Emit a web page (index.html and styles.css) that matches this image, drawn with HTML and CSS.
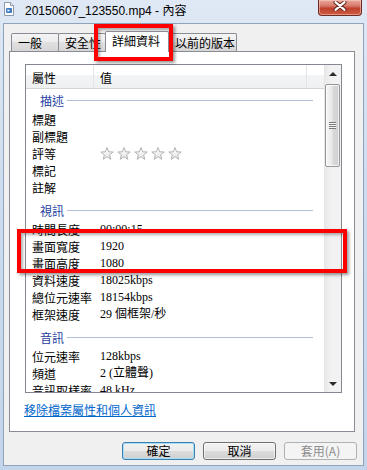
FILE: index.html
```html
<!DOCTYPE html>
<html lang="zh-Hant">

<head>
    <meta charset="utf-8">
    <title>20150607_123550.mp4 - 內容</title>
    <meta name="viewport" content="width=device-width, initial-scale=1.0">
    <link rel="stylesheet" href="styles.css">
</head>

<body>
    <div class="fenetre">
        <!-- Barre de titre -->
        <header class="barre-titre">
            <svg class="icone-fichier" viewBox="0 0 14 14">
                <path d="M2.5 0.5h6l3 3v10h-9z" fill="#fdfdfd" stroke="#8d9aab" />
                <path d="M8.5 0.5v3h3" fill="#e6edf5" stroke="#8d9aab" />
                <rect x="4" y="6" width="6" height="5" rx="1" fill="#3f7cc4" />
                <path d="M5.5 7.3l2.6 1.2-2.6 1.2z" fill="#fff" />
            </svg>
            <span class="titre">20150607_123550.mp4 - 內容</span>
            <div class="fermer">
                <svg viewBox="0 0 14 10" width="14" height="10">
                    <path d="M2.5 1.2l9 7.6M11.5 1.2l-9 7.6" stroke="#5b2118" stroke-width="4" stroke-linecap="round" />
                    <path d="M2.5 1.2l9 7.6M11.5 1.2l-9 7.6" stroke="#fff" stroke-width="2.2" stroke-linecap="round" />
                </svg>
            </div>
        </header>

        <div class="client">
            <!-- Onglets -->
            <nav class="onglets">
                <span class="onglet o1">一般</span>
                <span class="onglet o2">安全性</span>
                <span class="onglet o3 actif">詳細資料</span>
                <span class="onglet o4">以前的版本</span>
            </nav>

            <!-- Panneau des détails -->
            <section class="panneau">
                <div class="liste">
                    <div class="colonne-contenu">
                        <div class="entete">
                            <span class="entete-cellule c-nom">屬性</span>
                            <span class="entete-cellule c-valeur">值</span>
                            <span class="entete-cellule c-vide"></span>
                        </div>

                        <div class="groupe">描述</div>
                        <div class="ligne"><span>標題</span><span></span></div>
                        <div class="ligne"><span>副標題</span><span></span></div>
                        <div class="ligne"><span>評等</span>
                            <span class="etoiles">
                                <svg viewBox="0 0 84 14" width="84" height="14">
                                    <defs>
                                        <linearGradient id="degrade-etoile" x1="0" y1="0" x2="0" y2="1">
                                            <stop offset="0" stop-color="#ffffff" />
                                            <stop offset="1" stop-color="#e4e4e4" />
                                        </linearGradient>
                                        <polygon id="etoile" points="7,0.5 8.6,4.8 13.2,5 9.6,7.8 10.8,12.3 7,9.7 3.2,12.3 4.4,7.8 0.8,5 5.4,4.8" fill="url(#degrade-etoile)" stroke="#b3b3b3" stroke-linejoin="round" />
                                    </defs>
                                    <use href="#etoile" x="0" />
                                    <use href="#etoile" x="17" />
                                    <use href="#etoile" x="34" />
                                    <use href="#etoile" x="51" />
                                    <use href="#etoile" x="68" />
                                </svg>
                            </span>
                        </div>
                        <div class="ligne"><span>標記</span><span></span></div>
                        <div class="ligne"><span>註解</span><span></span></div>

                        <div class="groupe">視訊</div>
                        <div class="ligne"><span>時間長度</span><span>00:00:15</span></div>
                        <div class="ligne"><span>畫面寬度</span><span>1920</span></div>
                        <div class="ligne"><span>畫面高度</span><span>1080</span></div>
                        <div class="ligne"><span>資料速度</span><span>18025kbps</span></div>
                        <div class="ligne"><span>總位元速率</span><span>18154kbps</span></div>
                        <div class="ligne"><span>框架速度</span><span>29 個框架/秒</span></div>

                        <div class="groupe">音訊</div>
                        <div class="ligne"><span>位元速率</span><span>128kbps</span></div>
                        <div class="ligne"><span>頻道</span><span>2 (立體聲)</span></div>
                        <div class="ligne"><span>音訊取樣率</span><span>48 kHz</span></div>
                    </div>

                    <!-- Barre de défilement -->
                    <div class="defilement">
                        <div class="fleche"><span class="triangle-haut"></span></div>
                        <div class="curseur"><span class="prise"></span></div>
                        <div class="fleche bas"><span class="triangle-bas"></span></div>
                    </div>
                </div>

                <a class="lien" href="#">移除檔案屬性和個人資訊</a>
            </section>

            <!-- Boutons -->
            <div class="boutons">
                <button class="bouton defaut">確定</button>
                <button class="bouton">取消</button>
                <button class="bouton inactif">套用(A)</button>
            </div>
        </div>

        <!-- Cadres rouges d'annotation -->
        <div class="cadre-rouge cadre-onglet"></div>
        <div class="cadre-rouge cadre-dimensions"></div>
    </div>
</body>

</html>
```

FILE: styles.css
```css
/* Normalisation supplémentaire
============================================================*/

* {
    margin: 0;
    padding: 0;
    box-sizing: border-box;
}

html,
body {
    width: 367px;
    height: 470px;
    overflow: hidden;
}

body {
    font-family: "Noto Sans CJK TC", "Liberation Sans", sans-serif;
    font-size: 12px;
    color: #000;
}

/* Fenêtre et cadre
============================================================*/

.fenetre {
    position: relative;
    width: 367px;
    height: 470px;
    background: linear-gradient(#dfe8f4, #cddcee 40%, #c3d5eb);

    /*Conteneur flex en colonne*/
    display: flex;
    flex-direction: column;
}

.barre-titre {
    height: 23px;
    padding-left: 2px;
    display: flex;
    align-items: flex-start;
}

.icone-fichier {
    width: 14px;
    height: 14px;
    margin-top: 2px;
}

.titre {
    margin: 4px 0 0 9px;
    font-family: "Liberation Sans", "Noto Sans CJK TC", sans-serif;
    font-size: 12px;
    line-height: 14px;
}

.fermer {
    width: 44px;
    height: 16px;
    margin-left: auto;
    margin-right: 5px;
    border: 1px solid #6e2b22;
    border-top: none;
    border-radius: 0 0 4px 4px;
    background: linear-gradient(#e9a99b, #d6786a 40%, #c0412e 55%, #cc5b43);
    box-shadow: inset 0 0 0 1px rgba(255, 210, 200, 0.5);

    display: flex;
    justify-content: center;
    padding-top: 1px;
}

.client {
    flex: 1;
    margin: 0 3px 4px;
    background-color: #f0f0f0;
    border: 1px solid #8fa3bd;

    display: flex;
    flex-direction: column;
}

/* Onglets
============================================================*/

.onglets {
    height: 20px;
    margin-top: 7px;
    padding-left: 7px;
    display: flex;
    align-items: flex-end;
}

.onglet {
    height: 18px;
    margin-right: -1px;
    padding-left: 6px;
    line-height: 17px;
    white-space: nowrap;
    border: 1px solid #898c95;
    border-bottom: none;
    border-radius: 2px 2px 0 0;
    background: linear-gradient(#f4f4f4, #ececec 50%, #e0e0e0 50%, #d6d6d6);
}

.o1 {
    width: 48px;
}

.o2 {
    width: 48px;
}

.o3 {
    width: 64px;
}

.o4 {
    width: 69px;
}

.onglet.actif {
    position: relative;
    z-index: 1;
    height: 21px;
    margin-bottom: -1px;
    background: #fff;
}

/* Panneau et liste des propriétés
============================================================*/

.panneau {
    height: 381px;
    margin: 0 8px 0 5px;
    padding: 12px 0 0 15px;
    border: 1px solid #898c95;
    background-color: #fff;
}

.liste {
    width: 317px;
    height: 329px;
    border: 1px solid #828790;
    overflow: hidden;

    display: grid;
    grid-template-columns: 1fr 17px;
}

.colonne-contenu {
    overflow: hidden;
}

.entete {
    height: 24px;
    display: flex;
    border-bottom: 1px solid #d5d5d5;
    background: linear-gradient(#fff 0, #fff 42%, #f3f4f6 42%, #eff0f2);
}

.entete-cellule {
    padding: 2px 0 0 6px;
    line-height: 21px;
    border-right: 1px solid #e3e4e6;
}

.c-nom {
    width: 68px;
}

.c-valeur {
    width: 213px;
}

.c-vide {
    flex: 1;
    border-right: none;
}

.groupe {
    height: 22px;
    padding-left: 14px;
    color: #1f3d9f;
    display: flex;
    align-items: center;
}

.groupe::after {
    content: "";
    flex: 1;
    height: 1px;
    margin: 0 11px 0 3px;
    background-color: #b2bfdb;
}

.ligne+.groupe {
    margin-top: 3px;
}

.ligne {
    height: 17px;
    line-height: 17px;
    font-family: "Liberation Serif", "Noto Sans CJK TC", serif;
    white-space: nowrap;

    display: grid;
    grid-template-columns: 68px 1fr;
}

.ligne span {
    padding-left: 6px;
}

.ligne span:first-child {
    font-family: "Noto Sans CJK TC", sans-serif;
}

.etoiles {
    display: flex;
    align-items: center;
}

/* Barre de défilement
============================================================*/

.defilement {
    display: flex;
    flex-direction: column;
    border-left: 1px solid #e6e6e6;
    background: linear-gradient(to right, #e9e9e9, #f2f2f2 40%, #f2f2f2);
}

.fleche {
    height: 17px;
    display: flex;
    justify-content: center;
    align-items: center;
}

.fleche.bas {
    margin-top: auto;
}

.triangle-haut,
.triangle-bas {
    width: 0;
    height: 0;
    border-left: 4px solid transparent;
    border-right: 4px solid transparent;
}

.triangle-haut {
    border-bottom: 4px solid #2b2b2b;
}

.triangle-bas {
    border-top: 4px solid #2b2b2b;
}

.curseur {
    width: 15px;
    height: 83px;
    margin-top: 2px;
    border: 1px solid #979797;
    border-radius: 2px;
    background: linear-gradient(to right, #f6f6f6, #e9e9e9 45%, #d9d9d9 55%, #cfcfcf);
    box-shadow: inset 0 0 0 1px rgba(255, 255, 255, 0.7);

    display: flex;
    justify-content: center;
    align-items: center;
}

.prise {
    width: 7px;
    height: 7px;
    background: repeating-linear-gradient(#7c7c7c 0 1px, #f4f4f4 1px 2px);
}

/* Lien et boutons
============================================================*/

.lien {
    display: block;
    width: max-content;
    margin: 10px 0 0 -1px;
    line-height: 14px;
    color: #0066cc;
    text-decoration: underline;
}

.boutons {
    margin: 10px 6px 0 0;
    display: flex;
    justify-content: flex-end;
    gap: 8px;
}

.bouton {
    width: 73px;
    height: 18px;
    font-family: "Noto Sans CJK TC", sans-serif;
    font-size: 12px;
    line-height: 16px;
    color: #000;
    border: 1px solid #707070;
    border-radius: 3px;
    background: linear-gradient(#f2f2f2, #ebebeb 50%, #dddddd 50%, #cfcfcf);
    box-shadow: inset 0 0 0 1px rgba(255, 255, 255, 0.6);
}

.bouton.defaut {
    border-color: #3c7fb1;
    box-shadow: inset 0 0 0 1px #a6def7;
}

.bouton.inactif {
    color: #8d8d8d;
    border-color: #adb2b5;
    background: #f4f4f4;
    box-shadow: none;
}

/* Cadres rouges d'annotation
============================================================*/

.cadre-rouge {
    position: absolute;
    border: 4px solid #ff0000;
    box-shadow: 2px 2px 3px rgba(0, 0, 0, 0.4), inset 2px 2px 3px rgba(0, 0, 0, 0.3);
}

.cadre-onglet {
    left: 94px;
    top: 24px;
    width: 79px;
    height: 37px;
}

.cadre-dimensions {
    left: 17px;
    top: 229px;
    width: 330px;
    height: 44px;
}
```
